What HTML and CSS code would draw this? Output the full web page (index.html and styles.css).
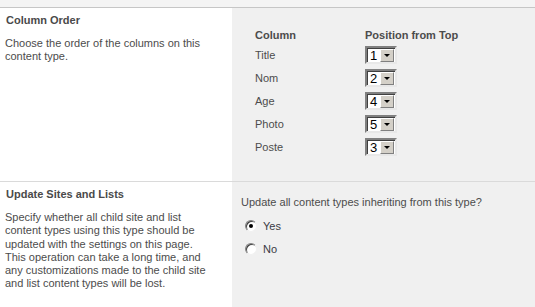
FILE: index.html
```html
<!DOCTYPE html>
<html lang="en">
<head>
    <meta charset="UTF-8">
    <title>Content Type Settings</title>
    <link rel="stylesheet" href="styles.css">
</head>
<body>
    <div class="topbar"></div>

    <div class="section">
        <div class="desc">
            <h3>Column Order</h3>
            <p>Choose the order of the columns on this content type.</p>
        </div>
        <div class="controls order">
            <div class="order-grid">
                <div class="col-head">Column</div>
                <div class="col-head">Position from Top</div>

                <div class="col-name">Title</div>
                <div class="pick"><span class="pick-value">1</span><span class="pick-btn"></span></div>

                <div class="col-name">Nom</div>
                <div class="pick"><span class="pick-value">2</span><span class="pick-btn"></span></div>

                <div class="col-name">Age</div>
                <div class="pick"><span class="pick-value">4</span><span class="pick-btn"></span></div>

                <div class="col-name">Photo</div>
                <div class="pick"><span class="pick-value">5</span><span class="pick-btn"></span></div>

                <div class="col-name">Poste</div>
                <div class="pick"><span class="pick-value">3</span><span class="pick-btn"></span></div>
            </div>
        </div>
    </div>

    <div class="section last">
        <div class="desc">
            <h3>Update Sites and Lists</h3>
            <p>Specify whether all child site and list content types using this type should be updated with the settings on this page. This operation can take a long time, and any customizations made to the child site and list content types will be lost.</p>
        </div>
        <div class="controls update">
            <div class="question">Update all content types inheriting from this type?</div>
            <label class="radio-row"><span class="radio checked"></span>Yes</label>
            <label class="radio-row"><span class="radio"></span>No</label>
        </div>
    </div>
</body>
</html>
```

FILE: styles.css
```css
body, html {
    margin: 0;
    padding: 0;
    background-color: #fff;
    font-family: 'Liberation Sans', Arial, sans-serif;
    font-size: 11px;
    color: #4c4c4c;
}
body {
    display: flex;
    flex-direction: column;
    min-height: 100vh;
}
.topbar {
    height: 7px;
    background-color: #f4f4f4;
    border-bottom: 1px solid #c6c6c6;
}
.section {
    display: grid;
    grid-template-columns: 232px 1fr;
    border-bottom: 1px solid #dadada;
}
.section.last {
    flex: 1;
    border-bottom: none;
}
.desc {
    padding: 6px 24px 0 5px;
}
.desc h3 {
    margin: 0 0 10px 1px;
    font-size: 11px;
    line-height: 13px;
    font-weight: bold;
    color: #4a4a4a;
}
.desc p {
    margin: 0;
    line-height: 13.3px;
}
.controls {
    background-color: #f0f0f0;
}
.order {
    padding: 21px 23px 25px;
}
.order-grid {
    display: grid;
    grid-template-columns: 110px auto;
    row-gap: 5px;
    align-items: center;
}
.col-head {
    font-weight: bold;
    line-height: 13px;
    margin-bottom: -1px;
}
.col-name {
    line-height: 18px;
}
.pick {
    display: flex;
    width: 28px;
    height: 14px;
    border: 2px solid;
    border-color: #808080 #e8e8e8 #e8e8e8 #808080;
    box-shadow: inset 1px 1px 0 #404040;
    background-color: #fff;
}
.pick-value {
    flex: 1;
    padding-left: 3px;
    font-size: 13px;
    line-height: 15px;
    color: #000;
}
.pick-btn {
    position: relative;
    width: 14px;
    height: 13px;
    margin: 1px 1px 0 0;
    background-color: #d4d0c8;
    border: 1px solid;
    border-color: #fff #808080 #808080 #fff;
    box-sizing: border-box;
}
.pick-btn::after {
    content: "";
    position: absolute;
    left: 3px;
    top: 4px;
    border-left: 3px solid transparent;
    border-right: 3px solid transparent;
    border-top: 3px solid #000;
}
.update {
    padding: 14px 9px 10px;
}
.question {
    line-height: 13px;
    margin-bottom: 8px;
}
.radio-row {
    display: flex;
    align-items: center;
    height: 18px;
    margin-bottom: 5px;
    padding-left: 4px;
    color: #3a3a44;
}
.radio {
    position: relative;
    width: 10px;
    height: 10px;
    margin-right: 6px;
    border-radius: 50%;
    border: 1px solid;
    border-color: #808080 #f0f0f0 #f0f0f0 #808080;
    background-color: #fff;
    box-shadow: inset 1px 1px 0 #404040;
}
.radio.checked::after {
    content: "";
    position: absolute;
    left: 3px;
    top: 3px;
    width: 4px;
    height: 4px;
    border-radius: 50%;
    background-color: #000;
}
```
